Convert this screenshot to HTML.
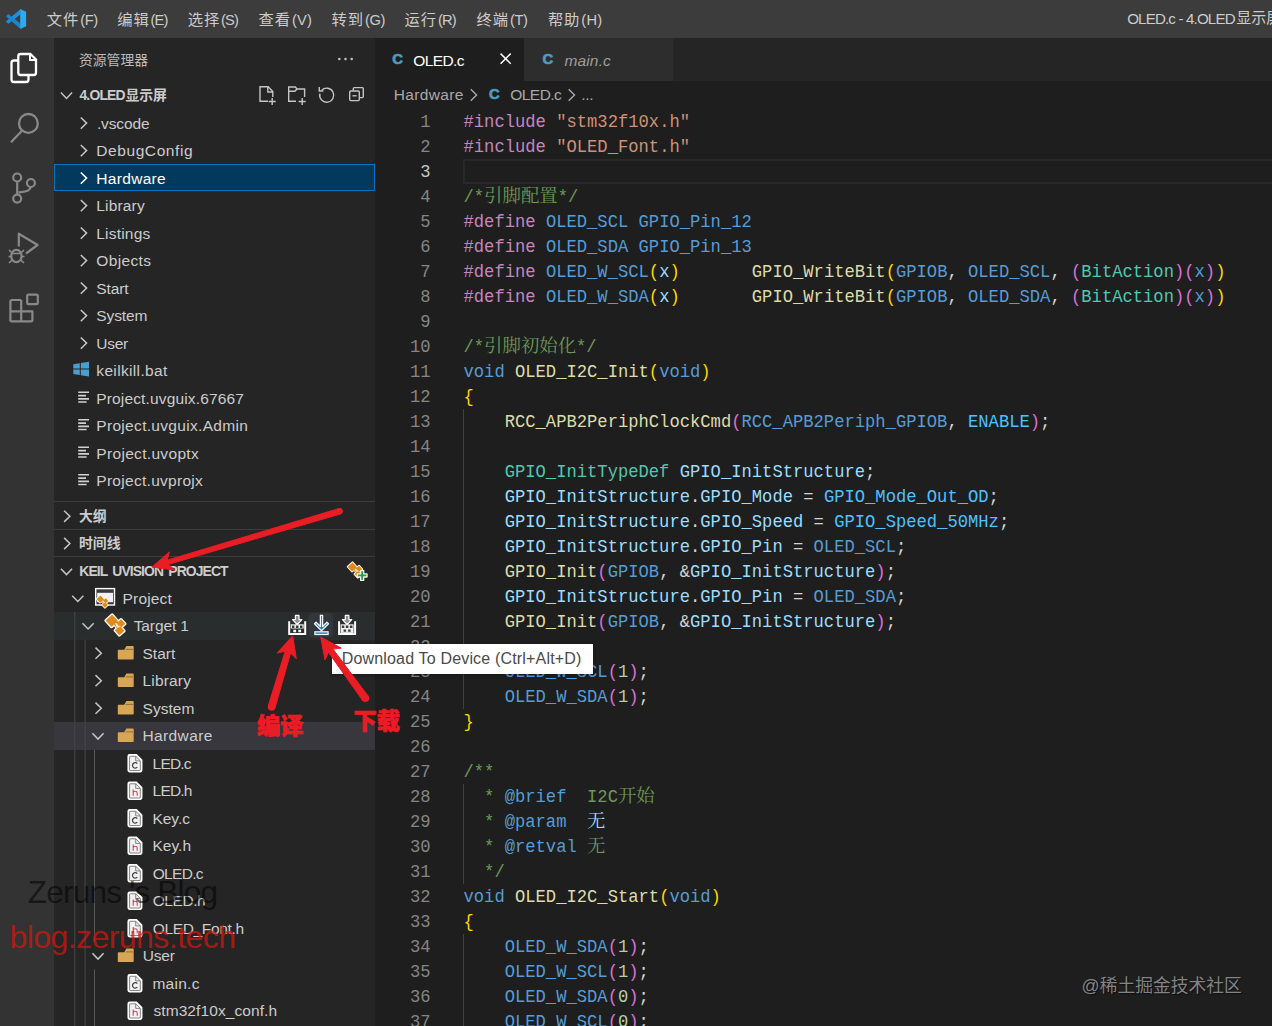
<!DOCTYPE html><html lang="zh-CN"><head><meta charset="utf-8"><title>OLED.c - 4.OLED显示屏</title><style>
*{box-sizing:border-box;margin:0;padding:0}
html,body{width:1272px;height:1026px;overflow:hidden;background:#1e1e1e}
body{position:relative;font-family:"Liberation Sans","Noto Sans CJK SC",sans-serif;color:#cccccc;font-size:16px}
.abs{position:absolute}
.bg{position:absolute}
.t{position:absolute;white-space:pre;line-height:20px;height:20px}
.ln{position:absolute;left:374px;width:56.5px;text-align:right;height:25px;line-height:25px;font-family:"Liberation Mono",monospace;font-size:17.17px;color:#858585;white-space:pre;transform:scaleY(1.08);transform-origin:0 17px;margin-top:1px}
.cl{position:absolute;left:463.5px;height:25px;line-height:25px;font-family:"Liberation Mono","Noto Serif CJK SC",monospace;font-size:17.17px;color:#d4d4d4;white-space:pre;transform:scaleY(1.08);transform-origin:0 17px;margin-top:1px}
.cj{font-family:"Noto Serif CJK SC",serif;font-size:18.4px;line-height:1;display:inline-block;height:20px;margin-top:-4px;position:relative;top:-0.5px;transform:scaleY(0.926);transform-origin:0 16px}
.k{color:#c586c0}.s{color:#ce9178}.c{color:#6a9955}.m{color:#569cd6}.f{color:#dcdcaa}.ty{color:#4ec9b0}.v{color:#9cdcfe}
.n{color:#b5cea8}.b1{color:#ffd700}.b2{color:#da70d6}.b3{color:#179fff}.e{color:#4fc1ff}.d{color:#569cd6}
svg{position:absolute;overflow:visible}
.cc{font-size:14.8px;font-weight:bold;color:#519aba;-webkit-text-stroke:0.7px #519aba}
.wm{position:absolute;white-space:pre;line-height:1}
</style></head><body>
<div class="bg" style="left:0.00px;top:0.00px;width:1272.00px;height:38.00px;background:#3c3c3c;"></div>
<div class="bg" style="left:0.00px;top:38.00px;width:54.00px;height:988.00px;background:#333333;"></div>
<div class="bg" style="left:54.00px;top:38.00px;width:320.50px;height:988.00px;background:#252526;"></div>
<div class="bg" style="left:374.50px;top:38.00px;width:898.00px;height:43.00px;background:#252526;"></div>
<div class="bg" style="left:374.50px;top:38.00px;width:149.50px;height:43.00px;background:#1e1e1e;"></div>
<div class="bg" style="left:524.00px;top:38.00px;width:149.00px;height:43.00px;background:#2d2d2d;"></div>
<div class="bg" style="left:374.50px;top:81.00px;width:898.00px;height:945.00px;background:#1e1e1e;"></div>
<svg style="left:0;top:0" width="40" height="38" viewBox="0 0 40 38"><path d="M20.4 9.3 L20.4 14.4 L8.3 23.8 L5.9 21.6 Z" fill="#1f8fdc"/><path d="M8.3 14 L20.4 23.4 L20.4 28.7 L5.9 16.2 Z" fill="#1a86d2"/><path d="M20.2 9 L26.1 11.7 V26.2 L20.2 28.9 Z" fill="#2cabf4"/></svg>
<div class="t" style="left:46.80px;top:9.7px;font-size:15.3px;letter-spacing:0.9px;color:#cccccc">文件</div>
<div class="t" style="left:80.20px;top:10.10px;font-size:14.7px;color:#cccccc;letter-spacing:-0.400px">(F)</div>
<div class="t" style="left:117.20px;top:9.7px;font-size:15.3px;letter-spacing:0.9px;color:#cccccc">编辑</div>
<div class="t" style="left:150.60px;top:10.10px;font-size:14.7px;color:#cccccc;letter-spacing:-0.900px">(E)</div>
<div class="t" style="left:187.70px;top:9.7px;font-size:15.3px;letter-spacing:0.9px;color:#cccccc">选择</div>
<div class="t" style="left:221.10px;top:10.10px;font-size:14.7px;color:#cccccc;letter-spacing:-0.900px">(S)</div>
<div class="t" style="left:258.60px;top:9.7px;font-size:15.3px;letter-spacing:0.9px;color:#cccccc">查看</div>
<div class="t" style="left:292.00px;top:10.10px;font-size:14.7px;color:#cccccc;letter-spacing:0.100px">(V)</div>
<div class="t" style="left:331.50px;top:9.7px;font-size:15.3px;letter-spacing:0.9px;color:#cccccc">转到</div>
<div class="t" style="left:364.90px;top:10.10px;font-size:14.7px;color:#cccccc;letter-spacing:-0.300px">(G)</div>
<div class="t" style="left:404.50px;top:9.7px;font-size:15.3px;letter-spacing:0.9px;color:#cccccc">运行</div>
<div class="t" style="left:437.90px;top:10.10px;font-size:14.7px;color:#cccccc;letter-spacing:-0.800px">(R)</div>
<div class="t" style="left:476.50px;top:9.7px;font-size:15.3px;letter-spacing:0.9px;color:#cccccc">终端</div>
<div class="t" style="left:509.90px;top:10.10px;font-size:14.7px;color:#cccccc;letter-spacing:-0.400px">(T)</div>
<div class="t" style="left:547.90px;top:9.7px;font-size:15.3px;letter-spacing:0.9px;color:#cccccc">帮助</div>
<div class="t" style="left:581.30px;top:10.10px;font-size:14.7px;color:#cccccc;letter-spacing:0.200px">(H)</div>
<div class="t" style="left:1127.20px;top:8.80px;font-size:15.1px;color:#cccccc;letter-spacing:-0.829px">OLED.c - 4.OLED</div>
<div class="t" style="left:1236.3px;top:7.9px;font-size:15px;color:#cccccc">显示屏 - Visual Studio Code</div>
<svg style="left:0;top:0" width="54" height="1026" viewBox="0 0 54 1026" fill="none" stroke-linejoin="round" stroke-linecap="butt">
<g stroke="#ffffff" stroke-width="2.3"><path d="M18.5 60.5 H14 Q11.5 60.5 11.5 63 V79.5 Q11.5 82 14 82 H26 Q28.5 82 28.5 79.5 V75.5"/><path d="M20.5 54 H30.5 L36 59.5 V72.8 Q36 75 33.8 75 H20.5 Q18.3 75 18.3 72.8 V56.2 Q18.3 54 20.5 54 Z"/><path d="M30 54.5 V60 H35.5" stroke-width="2"/></g>
<g stroke="#898989" stroke-width="2.3"><circle cx="28.4" cy="123.4" r="9.4"/><path d="M22 130.7 L11 142.2"/></g>
<g stroke="#898989" stroke-width="2.2"><circle cx="17.2" cy="177.5" r="4"/><circle cx="17.2" cy="198.6" r="4"/><circle cx="30.9" cy="183" r="4"/><path d="M17.2 181.5 V194.6"/><path d="M30.5 187 C30 191.5 25 191.5 18.5 192.5"/></g>
<g stroke="#898989" stroke-width="2.2"><path d="M18.8 246.5 V233.7 L37.6 245 L26 253.5"/><ellipse cx="16.4" cy="256" rx="5.2" ry="6.2"/><path d="M11.5 253.5 H21.5" stroke-width="1.6"/><path d="M9 250 L11.5 252.5 M24 250 L21.5 252.5 M8.5 256.5 H11 M22 256.5 H24.5 M9 263 L11.8 260.3 M24 263 L21.2 260.3" stroke-width="1.6"/></g>
<g stroke="#898989" stroke-width="2.2"><rect x="27.2" y="294.6" width="10.6" height="9.6" rx="1.2"/><path d="M21.2 300 H11.8 Q10.4 300 10.4 301.4 V320 Q10.4 321.4 11.8 321.4 H31 Q32.4 321.4 32.4 320 V311.4 H10.4 M21.2 300 V321.4"/></g>
</svg>
<div class="t" style="left:79px;top:50.5px;font-size:13.8px;color:#bbbbbb">资源管理器</div>
<div class="t" style="left:79.40px;top:85.40px;font-size:13.9px;color:#cccccc;font-weight:bold;letter-spacing:-0.800px">4.OLED</div>
<div class="t" style="left:125.4px;top:85.2px;font-size:13.85px;font-weight:bold;color:#cccccc">显示屏</div>
<div class="bg" style="left:54.00px;top:163.75px;width:320.50px;height:27.50px;background:#04395e;border:1px solid #0a72bd"></div>
<div class="t" style="left:96.90px;top:113.50px;font-size:15.5px;color:#cccccc;letter-spacing:-0.133px">.vscode</div>
<div class="t" style="left:96.30px;top:141.00px;font-size:15.5px;color:#cccccc;letter-spacing:0.580px">DebugConfig</div>
<div class="t" style="left:96.30px;top:168.50px;font-size:15.5px;color:#ffffff;letter-spacing:0.314px">Hardware</div>
<div class="t" style="left:96.30px;top:196.00px;font-size:15.5px;color:#cccccc;letter-spacing:0.167px">Library</div>
<div class="t" style="left:96.30px;top:223.50px;font-size:15.5px;color:#cccccc;letter-spacing:0.200px">Listings</div>
<div class="t" style="left:96.30px;top:251.00px;font-size:15.5px;color:#cccccc;letter-spacing:0.367px">Objects</div>
<div class="t" style="left:96.30px;top:278.50px;font-size:15.5px;color:#cccccc;letter-spacing:-0.100px">Start</div>
<div class="t" style="left:96.30px;top:306.00px;font-size:15.5px;color:#cccccc;letter-spacing:-0.120px">System</div>
<div class="t" style="left:96.30px;top:333.50px;font-size:15.5px;color:#cccccc;letter-spacing:-0.267px">User</div>
<div class="t" style="left:96.30px;top:361.00px;font-size:15.5px;color:#cccccc;letter-spacing:0.345px">keilkill.bat</div>
<div class="t" style="left:96.30px;top:388.50px;font-size:15.5px;color:#cccccc;letter-spacing:0.147px">Project.uvguix.67667</div>
<div class="t" style="left:96.30px;top:416.00px;font-size:15.5px;color:#cccccc;letter-spacing:0.316px">Project.uvguix.Admin</div>
<div class="t" style="left:96.30px;top:443.50px;font-size:15.5px;color:#cccccc;letter-spacing:0.323px">Project.uvoptx</div>
<div class="t" style="left:96.30px;top:471.00px;font-size:15.5px;color:#cccccc;letter-spacing:0.286px">Project.uvprojx</div>
<div class="bg" style="left:54.00px;top:501.00px;width:320.50px;height:1.00px;background:#3c3c3d;"></div>
<div class="bg" style="left:54.00px;top:529.00px;width:320.50px;height:1.00px;background:#3c3c3d;"></div>
<div class="bg" style="left:54.00px;top:556.00px;width:320.50px;height:1.00px;background:#3c3c3d;"></div>
<div class="t" style="left:79px;top:506.3px;font-size:13.85px;font-weight:bold;color:#cccccc">大纲</div>
<div class="t" style="left:79px;top:532.5px;font-size:13.85px;font-weight:bold;color:#cccccc">时间线</div>
<div class="t" style="left:79.30px;top:561.30px;font-size:13.9px;color:#cccccc;word-spacing:2.2px;font-weight:bold;letter-spacing:-0.895px">KEIL UVISION PROJECT</div>
<div class="bg" style="left:54.00px;top:612.00px;width:320.50px;height:27.50px;background:#2a2d2e;"></div>
<div class="bg" style="left:54.00px;top:722.00px;width:320.50px;height:27.50px;background:#37373d;"></div>
<div class="t" style="left:122.60px;top:588.75px;font-size:15.5px;color:#cccccc;letter-spacing:0.167px">Project</div>
<div class="t" style="left:133.70px;top:616.25px;font-size:15.5px;color:#cccccc;letter-spacing:-0.114px">Target 1</div>
<div class="t" style="left:142.50px;top:643.75px;font-size:15.5px;color:#cccccc;letter-spacing:0.000px">Start</div>
<div class="t" style="left:142.50px;top:671.25px;font-size:15.5px;color:#cccccc;letter-spacing:0.167px">Library</div>
<div class="t" style="left:142.50px;top:698.75px;font-size:15.5px;color:#cccccc;letter-spacing:0.040px">System</div>
<div class="t" style="left:142.50px;top:726.25px;font-size:15.5px;color:#cccccc;letter-spacing:0.371px">Hardware</div>
<div class="t" style="left:152.60px;top:753.75px;font-size:15.5px;color:#cccccc;letter-spacing:-0.800px">LED.c</div>
<div class="t" style="left:152.60px;top:781.25px;font-size:15.5px;color:#cccccc;letter-spacing:-0.800px">LED.h</div>
<div class="t" style="left:152.40px;top:808.75px;font-size:15.5px;color:#cccccc;letter-spacing:-0.000px">Key.c</div>
<div class="t" style="left:152.40px;top:836.25px;font-size:15.5px;color:#cccccc;letter-spacing:0.050px">Key.h</div>
<div class="t" style="left:152.70px;top:863.75px;font-size:15.5px;color:#cccccc;letter-spacing:-0.680px">OLED.c</div>
<div class="t" style="left:152.70px;top:891.25px;font-size:15.5px;color:#cccccc;letter-spacing:-0.440px">OLED.h</div>
<div class="t" style="left:152.70px;top:918.75px;font-size:15.5px;color:#cccccc;letter-spacing:-0.340px">OLED_Font.h</div>
<div class="t" style="left:142.70px;top:946.25px;font-size:15.5px;color:#cccccc;letter-spacing:-0.200px">User</div>
<div class="t" style="left:152.40px;top:973.75px;font-size:15.5px;color:#cccccc;letter-spacing:0.280px">main.c</div>
<div class="t" style="left:153.40px;top:1001.25px;font-size:15.5px;color:#cccccc;letter-spacing:0.093px">stm32f10x_conf.h</div>
<svg style="left:0;top:0" width="380" height="1026" viewBox="0 0 380 1026" fill="none">
<path d="M60.9 92.6 L66.5 98.4 L72.1 92.6" stroke="#c5c5c5" stroke-width="1.5" fill="none"/>
<path d="M80.8 117.5 L86.6 123.1 L80.8 128.7" stroke="#c5c5c5" stroke-width="1.5" fill="none"/>
<path d="M80.8 145.0 L86.6 150.6 L80.8 156.2" stroke="#c5c5c5" stroke-width="1.5" fill="none"/>
<path d="M80.8 172.5 L86.6 178.1 L80.8 183.7" stroke="#ffffff" stroke-width="1.5" fill="none"/>
<path d="M80.8 200.0 L86.6 205.6 L80.8 211.2" stroke="#c5c5c5" stroke-width="1.5" fill="none"/>
<path d="M80.8 227.5 L86.6 233.1 L80.8 238.7" stroke="#c5c5c5" stroke-width="1.5" fill="none"/>
<path d="M80.8 255.0 L86.6 260.6 L80.8 266.2" stroke="#c5c5c5" stroke-width="1.5" fill="none"/>
<path d="M80.8 282.5 L86.6 288.1 L80.8 293.7" stroke="#c5c5c5" stroke-width="1.5" fill="none"/>
<path d="M80.8 310.0 L86.6 315.6 L80.8 321.2" stroke="#c5c5c5" stroke-width="1.5" fill="none"/>
<path d="M80.8 337.5 L86.6 343.1 L80.8 348.7" stroke="#c5c5c5" stroke-width="1.5" fill="none"/>
<g fill="#4a9fd0"><path d="M73.3 364.2 L79.8 363.2 V368.6 H73.3 Z M80.8 363 L89 361.8 V368.6 H80.8 Z M73.3 369.6 H79.8 V375 L73.3 374 Z M80.8 369.6 H89 V376.4 L80.8 375.2 Z"/></g>
<g stroke="#d0d0d0" stroke-width="1.6"><path d="M78.2 392.3 H89 M78.2 395.6 H86 M78.2 398.9 H89 M78.2 402.0 H86.6"/></g>
<g stroke="#d0d0d0" stroke-width="1.6"><path d="M78.2 419.8 H89 M78.2 423.1 H86 M78.2 426.4 H89 M78.2 429.5 H86.6"/></g>
<g stroke="#d0d0d0" stroke-width="1.6"><path d="M78.2 447.3 H89 M78.2 450.6 H86 M78.2 453.9 H89 M78.2 457.0 H86.6"/></g>
<g stroke="#d0d0d0" stroke-width="1.6"><path d="M78.2 474.8 H89 M78.2 478.1 H86 M78.2 481.4 H89 M78.2 484.5 H86.6"/></g>
<path d="M64.1 510.7 L69.9 516.3 L64.1 521.9" stroke="#c5c5c5" stroke-width="1.5" fill="none"/>
<path d="M64.1 537.9 L69.9 543.5 L64.1 549.1" stroke="#c5c5c5" stroke-width="1.5" fill="none"/>
<path d="M60.9 568.8 L66.5 574.6 L72.1 568.8" stroke="#c5c5c5" stroke-width="1.5" fill="none"/>
<g fill="#c5c5c5"><circle cx="339.3" cy="59" r="1.25"/><circle cx="345.5" cy="59" r="1.25"/><circle cx="351.7" cy="59" r="1.25"/></g>
<g stroke="#c5c5c5" stroke-width="1.4" fill="none">
<path d="M268 101.2 H260 V86.8 H268.2 L272.8 91.5 V97 M267.8 87 V92 H272.6"/><path d="M272.2 98 V105 M268.7 101.5 H275.7"/>
<path d="M296 101.2 H288.7 V87 H295.3 L297 89 H304.6 V97 M288.7 91.3 H294.8 L297 89"/><path d="M302.2 98 V105 M298.7 101.5 H305.7"/>
<path d="M321.6 90.4 A7 7 0 1 1 319.9 93.6" /><path d="M319.3 87 V91 H323.4"/>
<rect x="349.7" y="91" width="9.6" height="9.6" rx="1"/><path d="M352.5 95.8 H356.6"/><path d="M353.3 91 V88.6 Q353.3 87.6 354.3 87.6 H362.3 Q363.3 87.6 363.3 88.6 V96.6 Q363.3 97.6 362.3 97.6 H359.5"/>
</g>
<path d="M74.8 612 V1026 M85.1 639.5 V1026" stroke="#484848" stroke-width="1"/>
<path d="M94.5 749.5 V942 M94.5 969.5 V1026" stroke="#585858" stroke-width="1"/>
<path d="M72.2 595.7 L77.8 601.5 L83.4 595.7" stroke="#c5c5c5" stroke-width="1.5" fill="none"/>
<path d="M82.5 623.2 L88.1 629.0 L93.7 623.2" stroke="#c5c5c5" stroke-width="1.5" fill="none"/>
<path d="M95.5 647.6 L101.3 653.2 L95.5 658.8" stroke="#c5c5c5" stroke-width="1.5" fill="none"/>
<path d="M95.5 675.1 L101.3 680.7 L95.5 686.3" stroke="#c5c5c5" stroke-width="1.5" fill="none"/>
<path d="M95.5 702.6 L101.3 708.2 L95.5 713.8" stroke="#c5c5c5" stroke-width="1.5" fill="none"/>
<path d="M92.4 733.3 L98.0 739.1 L103.6 733.3" stroke="#c5c5c5" stroke-width="1.5" fill="none"/>
<path d="M92.4 953.3 L98.0 959.1 L103.6 953.3" stroke="#c5c5c5" stroke-width="1.5" fill="none"/>
<path d="M118.6 649.7 h5.6 l2.2 -3.6 h6.5 q0.8 0 0.8 0.8 v11.8 q0 0.8 -0.8 0.8 h-14.3 q-0.8 0 -0.8 -0.8 v-8.2 q0 -0.8 0.8 -0.8 z" fill="#d8a657"/><path d="M125.6 649.4 h7.4" stroke="#8a6a32" stroke-width="0.9"/>
<path d="M118.6 677.2 h5.6 l2.2 -3.6 h6.5 q0.8 0 0.8 0.8 v11.8 q0 0.8 -0.8 0.8 h-14.3 q-0.8 0 -0.8 -0.8 v-8.2 q0 -0.8 0.8 -0.8 z" fill="#d8a657"/><path d="M125.6 676.9 h7.4" stroke="#8a6a32" stroke-width="0.9"/>
<path d="M118.6 704.7 h5.6 l2.2 -3.6 h6.5 q0.8 0 0.8 0.8 v11.8 q0 0.8 -0.8 0.8 h-14.3 q-0.8 0 -0.8 -0.8 v-8.2 q0 -0.8 0.8 -0.8 z" fill="#d8a657"/><path d="M125.6 704.4 h7.4" stroke="#8a6a32" stroke-width="0.9"/>
<path d="M118.6 732.2 h5.6 l2.2 -3.6 h6.5 q0.8 0 0.8 0.8 v11.8 q0 0.8 -0.8 0.8 h-14.3 q-0.8 0 -0.8 -0.8 v-8.2 q0 -0.8 0.8 -0.8 z" fill="#d8a657"/><path d="M125.6 731.9 h7.4" stroke="#8a6a32" stroke-width="0.9"/>
<path d="M118.6 952.2 h5.6 l2.2 -3.6 h6.5 q0.8 0 0.8 0.8 v11.8 q0 0.8 -0.8 0.8 h-14.3 q-0.8 0 -0.8 -0.8 v-8.2 q0 -0.8 0.8 -0.8 z" fill="#d8a657"/><path d="M125.6 951.9 h7.4" stroke="#8a6a32" stroke-width="0.9"/>
<path d="M129.6 754.8 h6.8 l5.3 5.3 v10.2 q0 1.4 -1.4 1.4 h-10.7 q-1.4 0 -1.4 -1.4 v-14.1 q0 -1.4 1.4 -1.4 z" fill="#f2f2f2" stroke="#ffffff" stroke-width="1.5"/>
<path d="M130.3 756.3 h5.4 v4.6 h4.6 v8.9 q0 0.7 -0.7 0.7 h-9.3 q-0.7 0 -0.7 -0.7 v-12.8 q0 -0.7 0.7 -0.7 z M135.9 756.5 l4.2 4.2" fill="none" stroke="#6a6a6a" stroke-width="0.8"/>
<path d="M137.3 763.7 a2.7 2.7 0 1 0 0 3.4" stroke="#444" stroke-width="1.3" fill="none"/>
<path d="M129.6 782.3 h6.8 l5.3 5.3 v10.2 q0 1.4 -1.4 1.4 h-10.7 q-1.4 0 -1.4 -1.4 v-14.1 q0 -1.4 1.4 -1.4 z" fill="#f2f2f2" stroke="#ffffff" stroke-width="1.5"/>
<path d="M130.3 783.8 h5.4 v4.6 h4.6 v8.9 q0 0.7 -0.7 0.7 h-9.3 q-0.7 0 -0.7 -0.7 v-12.8 q0 -0.7 0.7 -0.7 z M135.9 784.0 l4.2 4.2" fill="none" stroke="#6a6a6a" stroke-width="0.8"/>
<path d="M133.2 789.5 v6.2 M133.2 792.9 q0 -1.6 2 -1.6 q2 0 2 1.6 v2.8" stroke="#c0485c" stroke-width="1.1" fill="none"/>
<path d="M129.6 809.8 h6.8 l5.3 5.3 v10.2 q0 1.4 -1.4 1.4 h-10.7 q-1.4 0 -1.4 -1.4 v-14.1 q0 -1.4 1.4 -1.4 z" fill="#f2f2f2" stroke="#ffffff" stroke-width="1.5"/>
<path d="M130.3 811.3 h5.4 v4.6 h4.6 v8.9 q0 0.7 -0.7 0.7 h-9.3 q-0.7 0 -0.7 -0.7 v-12.8 q0 -0.7 0.7 -0.7 z M135.9 811.5 l4.2 4.2" fill="none" stroke="#6a6a6a" stroke-width="0.8"/>
<path d="M137.3 818.7 a2.7 2.7 0 1 0 0 3.4" stroke="#444" stroke-width="1.3" fill="none"/>
<path d="M129.6 837.3 h6.8 l5.3 5.3 v10.2 q0 1.4 -1.4 1.4 h-10.7 q-1.4 0 -1.4 -1.4 v-14.1 q0 -1.4 1.4 -1.4 z" fill="#f2f2f2" stroke="#ffffff" stroke-width="1.5"/>
<path d="M130.3 838.8 h5.4 v4.6 h4.6 v8.9 q0 0.7 -0.7 0.7 h-9.3 q-0.7 0 -0.7 -0.7 v-12.8 q0 -0.7 0.7 -0.7 z M135.9 839.0 l4.2 4.2" fill="none" stroke="#6a6a6a" stroke-width="0.8"/>
<path d="M133.2 844.5 v6.2 M133.2 847.9 q0 -1.6 2 -1.6 q2 0 2 1.6 v2.8" stroke="#c0485c" stroke-width="1.1" fill="none"/>
<path d="M129.6 864.8 h6.8 l5.3 5.3 v10.2 q0 1.4 -1.4 1.4 h-10.7 q-1.4 0 -1.4 -1.4 v-14.1 q0 -1.4 1.4 -1.4 z" fill="#f2f2f2" stroke="#ffffff" stroke-width="1.5"/>
<path d="M130.3 866.3 h5.4 v4.6 h4.6 v8.9 q0 0.7 -0.7 0.7 h-9.3 q-0.7 0 -0.7 -0.7 v-12.8 q0 -0.7 0.7 -0.7 z M135.9 866.5 l4.2 4.2" fill="none" stroke="#6a6a6a" stroke-width="0.8"/>
<path d="M137.3 873.7 a2.7 2.7 0 1 0 0 3.4" stroke="#444" stroke-width="1.3" fill="none"/>
<path d="M129.6 892.3 h6.8 l5.3 5.3 v10.2 q0 1.4 -1.4 1.4 h-10.7 q-1.4 0 -1.4 -1.4 v-14.1 q0 -1.4 1.4 -1.4 z" fill="#f2f2f2" stroke="#ffffff" stroke-width="1.5"/>
<path d="M130.3 893.8 h5.4 v4.6 h4.6 v8.9 q0 0.7 -0.7 0.7 h-9.3 q-0.7 0 -0.7 -0.7 v-12.8 q0 -0.7 0.7 -0.7 z M135.9 894.0 l4.2 4.2" fill="none" stroke="#6a6a6a" stroke-width="0.8"/>
<path d="M133.2 899.5 v6.2 M133.2 902.9 q0 -1.6 2 -1.6 q2 0 2 1.6 v2.8" stroke="#c0485c" stroke-width="1.1" fill="none"/>
<path d="M129.6 919.8 h6.8 l5.3 5.3 v10.2 q0 1.4 -1.4 1.4 h-10.7 q-1.4 0 -1.4 -1.4 v-14.1 q0 -1.4 1.4 -1.4 z" fill="#f2f2f2" stroke="#ffffff" stroke-width="1.5"/>
<path d="M130.3 921.3 h5.4 v4.6 h4.6 v8.9 q0 0.7 -0.7 0.7 h-9.3 q-0.7 0 -0.7 -0.7 v-12.8 q0 -0.7 0.7 -0.7 z M135.9 921.5 l4.2 4.2" fill="none" stroke="#6a6a6a" stroke-width="0.8"/>
<path d="M133.2 927.0 v6.2 M133.2 930.4 q0 -1.6 2 -1.6 q2 0 2 1.6 v2.8" stroke="#c0485c" stroke-width="1.1" fill="none"/>
<path d="M129.6 974.8 h6.8 l5.3 5.3 v10.2 q0 1.4 -1.4 1.4 h-10.7 q-1.4 0 -1.4 -1.4 v-14.1 q0 -1.4 1.4 -1.4 z" fill="#f2f2f2" stroke="#ffffff" stroke-width="1.5"/>
<path d="M130.3 976.3 h5.4 v4.6 h4.6 v8.9 q0 0.7 -0.7 0.7 h-9.3 q-0.7 0 -0.7 -0.7 v-12.8 q0 -0.7 0.7 -0.7 z M135.9 976.5 l4.2 4.2" fill="none" stroke="#6a6a6a" stroke-width="0.8"/>
<path d="M137.3 983.7 a2.7 2.7 0 1 0 0 3.4" stroke="#444" stroke-width="1.3" fill="none"/>
<path d="M129.6 1002.3 h6.8 l5.3 5.3 v10.2 q0 1.4 -1.4 1.4 h-10.7 q-1.4 0 -1.4 -1.4 v-14.1 q0 -1.4 1.4 -1.4 z" fill="#f2f2f2" stroke="#ffffff" stroke-width="1.5"/>
<path d="M130.3 1003.8 h5.4 v4.6 h4.6 v8.9 q0 0.7 -0.7 0.7 h-9.3 q-0.7 0 -0.7 -0.7 v-12.8 q0 -0.7 0.7 -0.7 z M135.9 1004.0 l4.2 4.2" fill="none" stroke="#6a6a6a" stroke-width="0.8"/>
<path d="M133.2 1009.5 v6.2 M133.2 1012.9 q0 -1.6 2 -1.6 q2 0 2 1.6 v2.8" stroke="#c0485c" stroke-width="1.1" fill="none"/>
<rect x="95.7" y="588.6" width="18.8" height="16.4" fill="#3a3a3a" stroke="#ffffff" stroke-width="1.4"/><rect x="97.2" y="592.8" width="15.8" height="9.4" fill="#f3f3f3"/>
<g transform="translate(96.20 595.60) scale(0.600)">
<g fill="#ffffff" stroke="#ffffff" stroke-width="2.8" stroke-linejoin="round"><rect x="2.50" y="1.50" width="8.60" height="8.60" transform="rotate(-42 6.80 5.80)"/><rect x="12.90" y="5.60" width="6.00" height="6.00" transform="rotate(-42 15.90 8.60)"/><rect x="11.30" y="12.30" width="6.60" height="6.60" transform="rotate(-42 14.60 15.60)"/><path d="M6.6 5.6 L15.9 8.4 L14.6 15.4 Z" stroke-width="3.4" fill="none"/></g>
<g fill="#e08a1e" stroke="#e08a1e" stroke-width="0.3"><rect x="2.50" y="1.50" width="8.60" height="8.60" transform="rotate(-42 6.80 5.80)"/><rect x="12.90" y="5.60" width="6.00" height="6.00" transform="rotate(-42 15.90 8.60)"/><rect x="11.30" y="12.30" width="6.60" height="6.60" transform="rotate(-42 14.60 15.60)"/><path d="M8 7 L14.6 15.4 M9 6.4 L15.9 8.4" stroke-width="1.8" fill="none"/></g>
<path d="M10.6 8.6 L12.3 12.2 L15.3 11.2" stroke="#fbe3b6" stroke-width="1.1" fill="none"/>
</g>
<g transform="translate(105.00 615.00) scale(1.000)">
<g fill="#ffffff" stroke="#ffffff" stroke-width="2.8" stroke-linejoin="round"><rect x="2.50" y="1.50" width="8.60" height="8.60" transform="rotate(-42 6.80 5.80)"/><rect x="12.90" y="5.60" width="6.00" height="6.00" transform="rotate(-42 15.90 8.60)"/><rect x="11.30" y="12.30" width="6.60" height="6.60" transform="rotate(-42 14.60 15.60)"/><path d="M6.6 5.6 L15.9 8.4 L14.6 15.4 Z" stroke-width="3.4" fill="none"/></g>
<g fill="#e08a1e" stroke="#e08a1e" stroke-width="0.3"><rect x="2.50" y="1.50" width="8.60" height="8.60" transform="rotate(-42 6.80 5.80)"/><rect x="12.90" y="5.60" width="6.00" height="6.00" transform="rotate(-42 15.90 8.60)"/><rect x="11.30" y="12.30" width="6.60" height="6.60" transform="rotate(-42 14.60 15.60)"/><path d="M8 7 L14.6 15.4 M9 6.4 L15.9 8.4" stroke-width="1.8" fill="none"/></g>
<path d="M10.6 8.6 L12.3 12.2 L15.3 11.2" stroke="#fbe3b6" stroke-width="1.1" fill="none"/>
</g>
<g transform="translate(347.20 562.60) scale(0.740)">
<g fill="#ffffff" stroke="#ffffff" stroke-width="2.8" stroke-linejoin="round"><rect x="2.50" y="1.50" width="8.60" height="8.60" transform="rotate(-42 6.80 5.80)"/><rect x="12.90" y="5.60" width="6.00" height="6.00" transform="rotate(-42 15.90 8.60)"/><rect x="11.30" y="12.30" width="6.60" height="6.60" transform="rotate(-42 14.60 15.60)"/><path d="M6.6 5.6 L15.9 8.4 L14.6 15.4 Z" stroke-width="3.4" fill="none"/></g>
<g fill="#e08a1e" stroke="#e08a1e" stroke-width="0.3"><rect x="2.50" y="1.50" width="8.60" height="8.60" transform="rotate(-42 6.80 5.80)"/><rect x="12.90" y="5.60" width="6.00" height="6.00" transform="rotate(-42 15.90 8.60)"/><rect x="11.30" y="12.30" width="6.60" height="6.60" transform="rotate(-42 14.60 15.60)"/><path d="M8 7 L14.6 15.4 M9 6.4 L15.9 8.4" stroke-width="1.8" fill="none"/></g>
<path d="M10.6 8.6 L12.3 12.2 L15.3 11.2" stroke="#fbe3b6" stroke-width="1.1" fill="none"/>
</g>
<path d="M363.7 570.6 v3.3 h3.3 v3.1 h-3.3 v3.3 h-3.1 v-3.3 h-3.3 v-3.1 h3.3 v-3.3 z" fill="#2f9a3f" stroke="#f0f8f0" stroke-width="1.3" stroke-linejoin="round"/>
<rect x="308.6" y="613" width="24.6" height="24.4" rx="4" fill="#33363a"/>
<g transform="translate(288.1 614.9)">
<path d="M1.1 6.4 V19.2 H17.1 V6.4" fill="none" stroke="#ffffff" stroke-width="2"/>
<rect x="2.6" y="9.4" width="13" height="4.2" fill="#f0f0f0"/>
<path d="M7.3 0.5 h3.6 v4.2 h2.9 l-4.7 4.9 l-4.7 -4.9 h2.9 z" fill="#8f8f8f" stroke="#ffffff" stroke-width="1.2" stroke-linejoin="round"/>
<path d="M3.8 10.7 h2.5 v2.3 h-2.5 z M7.85 10.7 h2.5 v2.3 h-2.5 z M11.9 10.7 h2.5 v2.3 h-2.5 z" fill="#3a3a3a"/>
<path d="M5.2 14.8 h2.8 v2.5 h-2.8 z M10.2 14.8 h2.8 v2.5 h-2.8 z" fill="#ffffff"/>
</g>
<g transform="translate(338.0 614.9)">
<path d="M1.1 6.4 V19.2 H17.1 V6.4" fill="none" stroke="#ffffff" stroke-width="2"/>
<rect x="2.6" y="9.4" width="13" height="8.6" fill="#f0f0f0"/>
<path d="M7.3 0.5 h3.6 v4.2 h2.9 l-4.7 4.9 l-4.7 -4.9 h2.9 z" fill="#8f8f8f" stroke="#ffffff" stroke-width="1.2" stroke-linejoin="round"/>
<path d="M3.8 10.7 h2.5 v2.3 h-2.5 z M7.85 10.7 h2.5 v2.3 h-2.5 z M11.9 10.7 h2.5 v2.3 h-2.5 z" fill="#3a3a3a"/>
<path d="M5.6 14.6 h2.5 v2.3 h-2.5 z M10.1 14.6 h2.5 v2.3 h-2.5 z" fill="#3a3a3a"/>
</g>
<g transform="translate(314.1 614.9)"><path d="M6.3 0.4 h2.2 v11.2 l4.3 -4.3 l1.6 1.6 l-7 7 l-7 -7 l1.6 -1.6 l4.3 4.3 z" fill="#1b76c4" stroke="#f4f9fd" stroke-width="1.3" stroke-linejoin="round"/><rect x="0.8" y="16.9" width="13.2" height="2.7" fill="#2a86d4" stroke="#f4f9fd" stroke-width="1.2"/></g>
</svg>
<div class="t cc" style="left:392.3px;top:49.1px">C</div>
<div class="t" style="left:413.30px;top:50.80px;font-size:15.5px;color:#ffffff;letter-spacing:-0.600px">OLED.c</div>
<svg style="left:499.8px;top:53.4px" width="11.3" height="11.3" viewBox="0 0 11.3 11.3"><path d="M0.6 0.6 L10.7 10.7 M10.7 0.6 L0.6 10.7" stroke="#ffffff" stroke-width="1.5" fill="none"/></svg>
<div class="t cc" style="left:542.6px;top:49.1px">C</div>
<div class="t" style="left:564.40px;top:50.80px;font-size:15.5px;color:#9d9d9d;font-style:italic;letter-spacing:0.160px">main.c</div>
<div class="t" style="left:393.70px;top:85.40px;font-size:15.5px;color:#a9a9a9;letter-spacing:0.343px">Hardware</div>
<div class="t cc" style="left:489.1px;top:83.7px">C</div>
<div class="t" style="left:510.30px;top:85.40px;font-size:15.5px;color:#a9a9a9;letter-spacing:-0.560px">OLED.c</div>
<div class="t" style="left:581.20px;top:85.40px;font-size:15.5px;color:#a9a9a9;letter-spacing:-0.300px">...</div>
<svg style="left:0;top:0" width="700" height="110" viewBox="0 0 700 110"><path d="M470.8 89.3 L476.6 95 L470.8 100.7 M568.7 89.3 L574.5 95 L568.7 100.7" stroke="#a9a9a9" stroke-width="1.4" fill="none"/></svg>
<div class="abs" style="left:462.5px;top:159.25px;width:820px;height:25px;border:2.5px solid #282828"></div>
<div class="bg" style="left:463.00px;top:409.25px;width:1.00px;height:300.00px;background:#404040;"></div>
<div class="bg" style="left:463.00px;top:784.25px;width:1.00px;height:100.00px;background:#404040;"></div>
<div class="bg" style="left:463.00px;top:934.25px;width:1.00px;height:125.00px;background:#404040;"></div>
<div class="ln" style="top:109.25px;color:#858585">1</div>
<div class="cl" style="top:109.25px"><span class="k">#include</span> <span class="s">"stm32f10x.h"</span></div>
<div class="ln" style="top:134.25px;color:#858585">2</div>
<div class="cl" style="top:134.25px"><span class="k">#include</span> <span class="s">"OLED_Font.h"</span></div>
<div class="ln" style="top:159.25px;color:#c6c6c6">3</div>
<div class="ln" style="top:184.25px;color:#858585">4</div>
<div class="cl" style="top:184.25px"><span class="c">/*<span class="cj">引脚配置</span>*/</span></div>
<div class="ln" style="top:209.25px;color:#858585">5</div>
<div class="cl" style="top:209.25px"><span class="k">#define</span> <span class="m">OLED_SCL</span> <span class="m">GPIO_Pin_12</span></div>
<div class="ln" style="top:234.25px;color:#858585">6</div>
<div class="cl" style="top:234.25px"><span class="k">#define</span> <span class="m">OLED_SDA</span> <span class="m">GPIO_Pin_13</span></div>
<div class="ln" style="top:259.25px;color:#858585">7</div>
<div class="cl" style="top:259.25px"><span class="k">#define</span> <span class="m">OLED_W_SCL</span><span class="b1">(</span><span class="v">x</span><span class="b1">)</span>       <span class="f">GPIO_WriteBit</span><span class="b1">(</span><span class="m">GPIOB</span>, <span class="m">OLED_SCL</span>, <span class="b2">(</span><span class="ty">BitAction</span><span class="b2">)</span><span class="b2">(</span><span class="m">x</span><span class="b2">)</span><span class="b1">)</span></div>
<div class="ln" style="top:284.25px;color:#858585">8</div>
<div class="cl" style="top:284.25px"><span class="k">#define</span> <span class="m">OLED_W_SDA</span><span class="b1">(</span><span class="v">x</span><span class="b1">)</span>       <span class="f">GPIO_WriteBit</span><span class="b1">(</span><span class="m">GPIOB</span>, <span class="m">OLED_SDA</span>, <span class="b2">(</span><span class="ty">BitAction</span><span class="b2">)</span><span class="b2">(</span><span class="m">x</span><span class="b2">)</span><span class="b1">)</span></div>
<div class="ln" style="top:309.25px;color:#858585">9</div>
<div class="ln" style="top:334.25px;color:#858585">10</div>
<div class="cl" style="top:334.25px"><span class="c">/*<span class="cj">引脚初始化</span>*/</span></div>
<div class="ln" style="top:359.25px;color:#858585">11</div>
<div class="cl" style="top:359.25px"><span class="d">void</span> <span class="f">OLED_I2C_Init</span><span class="b1">(</span><span class="d">void</span><span class="b1">)</span></div>
<div class="ln" style="top:384.25px;color:#858585">12</div>
<div class="cl" style="top:384.25px"><span class="b1">{</span></div>
<div class="ln" style="top:409.25px;color:#858585">13</div>
<div class="cl" style="top:409.25px">    <span class="f">RCC_APB2PeriphClockCmd</span><span class="b2">(</span><span class="m">RCC_APB2Periph_GPIOB</span>, <span class="e">ENABLE</span><span class="b2">)</span>;</div>
<div class="ln" style="top:434.25px;color:#858585">14</div>
<div class="ln" style="top:459.25px;color:#858585">15</div>
<div class="cl" style="top:459.25px">    <span class="ty">GPIO_InitTypeDef</span> <span class="v">GPIO_InitStructure</span>;</div>
<div class="ln" style="top:484.25px;color:#858585">16</div>
<div class="cl" style="top:484.25px">    <span class="v">GPIO_InitStructure</span>.<span class="v">GPIO_Mode</span> = <span class="e">GPIO_Mode_Out_OD</span>;</div>
<div class="ln" style="top:509.25px;color:#858585">17</div>
<div class="cl" style="top:509.25px">    <span class="v">GPIO_InitStructure</span>.<span class="v">GPIO_Speed</span> = <span class="e">GPIO_Speed_50MHz</span>;</div>
<div class="ln" style="top:534.25px;color:#858585">18</div>
<div class="cl" style="top:534.25px">    <span class="v">GPIO_InitStructure</span>.<span class="v">GPIO_Pin</span> = <span class="m">OLED_SCL</span>;</div>
<div class="ln" style="top:559.25px;color:#858585">19</div>
<div class="cl" style="top:559.25px">    <span class="f">GPIO_Init</span><span class="b2">(</span><span class="m">GPIOB</span>, &<span class="v">GPIO_InitStructure</span><span class="b2">)</span>;</div>
<div class="ln" style="top:584.25px;color:#858585">20</div>
<div class="cl" style="top:584.25px">    <span class="v">GPIO_InitStructure</span>.<span class="v">GPIO_Pin</span> = <span class="m">OLED_SDA</span>;</div>
<div class="ln" style="top:609.25px;color:#858585">21</div>
<div class="cl" style="top:609.25px">    <span class="f">GPIO_Init</span><span class="b2">(</span><span class="m">GPIOB</span>, &<span class="v">GPIO_InitStructure</span><span class="b2">)</span>;</div>
<div class="ln" style="top:634.25px;color:#858585">22</div>
<div class="ln" style="top:659.25px;color:#858585">23</div>
<div class="cl" style="top:659.25px">    <span class="m">OLED_W_SCL</span><span class="b2">(</span><span class="n">1</span><span class="b2">)</span>;</div>
<div class="ln" style="top:684.25px;color:#858585">24</div>
<div class="cl" style="top:684.25px">    <span class="m">OLED_W_SDA</span><span class="b2">(</span><span class="n">1</span><span class="b2">)</span>;</div>
<div class="ln" style="top:709.25px;color:#858585">25</div>
<div class="cl" style="top:709.25px"><span class="b1">}</span></div>
<div class="ln" style="top:734.25px;color:#858585">26</div>
<div class="ln" style="top:759.25px;color:#858585">27</div>
<div class="cl" style="top:759.25px"><span class="c">/**</span></div>
<div class="ln" style="top:784.25px;color:#858585">28</div>
<div class="cl" style="top:784.25px"><span class="c">  * </span><span class="d">@brief</span><span class="c">  I2C</span><span class="c"><span class="cj">开始</span></span></div>
<div class="ln" style="top:809.25px;color:#858585">29</div>
<div class="cl" style="top:809.25px"><span class="c">  * </span><span class="d">@param</span><span class="c">  </span><span class="v"><span class="cj">无</span></span></div>
<div class="ln" style="top:834.25px;color:#858585">30</div>
<div class="cl" style="top:834.25px"><span class="c">  * </span><span class="d">@retval</span><span class="c"> </span><span class="c"><span class="cj">无</span></span></div>
<div class="ln" style="top:859.25px;color:#858585">31</div>
<div class="cl" style="top:859.25px"><span class="c">  */</span></div>
<div class="ln" style="top:884.25px;color:#858585">32</div>
<div class="cl" style="top:884.25px"><span class="d">void</span> <span class="f">OLED_I2C_Start</span><span class="b1">(</span><span class="d">void</span><span class="b1">)</span></div>
<div class="ln" style="top:909.25px;color:#858585">33</div>
<div class="cl" style="top:909.25px"><span class="b1">{</span></div>
<div class="ln" style="top:934.25px;color:#858585">34</div>
<div class="cl" style="top:934.25px">    <span class="m">OLED_W_SDA</span><span class="b2">(</span><span class="n">1</span><span class="b2">)</span>;</div>
<div class="ln" style="top:959.25px;color:#858585">35</div>
<div class="cl" style="top:959.25px">    <span class="m">OLED_W_SCL</span><span class="b2">(</span><span class="n">1</span><span class="b2">)</span>;</div>
<div class="ln" style="top:984.25px;color:#858585">36</div>
<div class="cl" style="top:984.25px">    <span class="m">OLED_W_SDA</span><span class="b2">(</span><span class="n">0</span><span class="b2">)</span>;</div>
<div class="ln" style="top:1009.25px;color:#858585">37</div>
<div class="cl" style="top:1009.25px">    <span class="m">OLED_W_SCL</span><span class="b2">(</span><span class="n">0</span><span class="b2">)</span>;</div>
<div class="bg" style="left:332.00px;top:644.00px;width:260.50px;height:30.30px;background:#ffffff;box-shadow:0 1px 3px rgba(0,0,0,.35)"></div>
<div class="t" style="left:341.70px;top:648.60px;font-size:16px;color:#4a4a4a;letter-spacing:0.173px">Download To Device (Ctrl+Alt+D)</div>
<svg style="left:0;top:0" width="1272" height="1026" viewBox="0 0 1272 1026">
<path d="M339.0 508.5 L167.2 560.2 L169.4 551.9 L152.0 567.0 L174.8 570.1 L168.4 564.4 L340.6 513.9 Z" fill="#ea1c24" stroke="#ea1c24" stroke-width="1" stroke-linejoin="round"/><circle cx="339.8" cy="511.2" r="3.1" fill="#ea1c24"/>
<path d="M275.0 708.0 L290.6 652.9 L296.3 658.8 L292.7 635.8 L277.1 653.1 L285.2 651.3 L268.2 706.0 Z" fill="#ea1c24" stroke="#ea1c24" stroke-width="1" stroke-linejoin="round"/><circle cx="271.6" cy="707.0" r="3.8" fill="#ea1c24"/>
<path d="M368.2 696.2 L333.0 649.1 L341.2 648.1 L320.7 637.0 L325.0 659.9 L328.5 652.4 L362.6 700.4 Z" fill="#ea1c24" stroke="#ea1c24" stroke-width="1" stroke-linejoin="round"/><circle cx="365.4" cy="698.3" r="3.8" fill="#ea1c24"/>
<text x="257" y="733.5" font-family="Liberation Sans, Noto Sans CJK SC, sans-serif" font-weight="900" font-size="23.2" fill="#ea1c24" stroke="#ea1c24" stroke-width="0.7">编译</text>
<text x="353.5" y="729" font-family="Liberation Sans, Noto Sans CJK SC, sans-serif" font-weight="900" font-size="23.2" fill="#ea1c24" stroke="#ea1c24" stroke-width="0.7">下载</text>
</svg>
<div class="wm" style="left:27.80px;top:876.85px;font-size:31.6px;color:rgba(0,0,0,0.55);letter-spacing:-0.815px;">Zeruns 's Blog</div>
<div class="wm" style="left:9.40px;top:921.31px;font-size:32px;color:rgba(208,22,16,0.76);letter-spacing:-0.547px;">blog.zeruns.tech</div>
<div class="wm" style="left:1081.6px;top:977.6px;font-size:17.8px;color:rgba(158,158,158,0.82);text-shadow:1px 1px 1px rgba(0,0,0,.55)">@稀土掘金技术社区</div>
</body></html>
